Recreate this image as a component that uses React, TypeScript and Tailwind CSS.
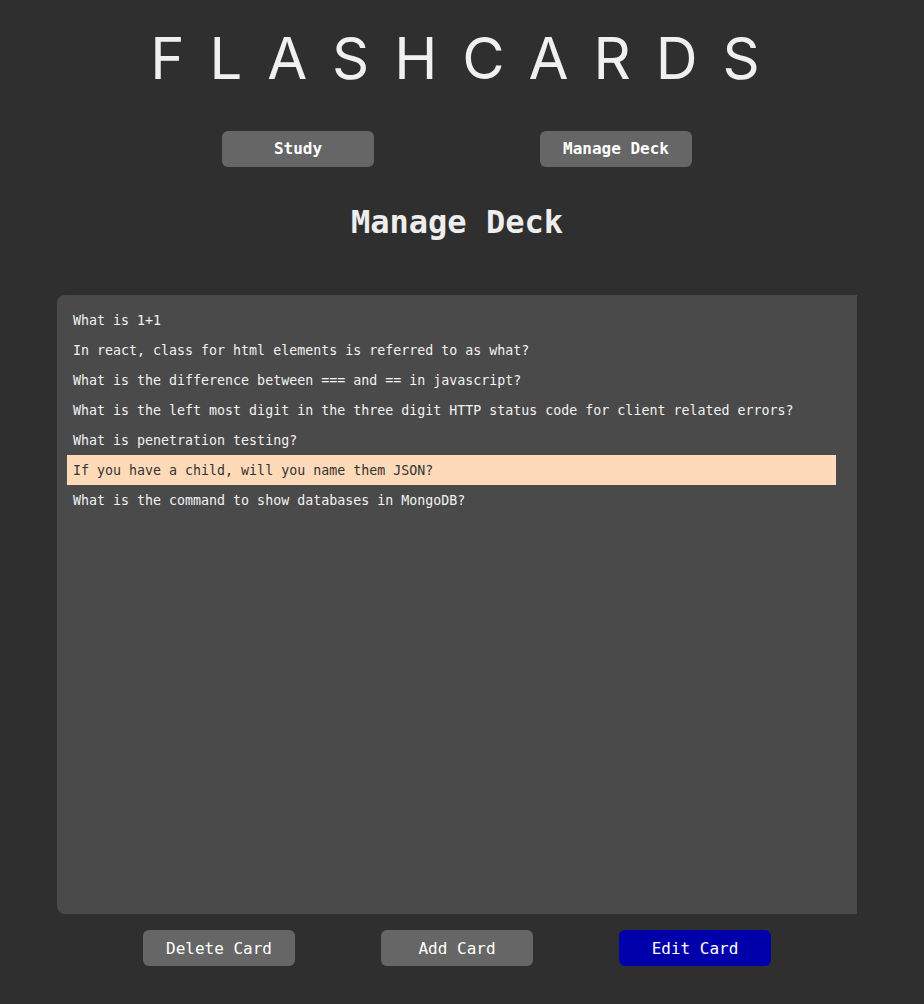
import { useState } from 'react';

const cards = [
    'What is 1+1',
    'In react, class for html elements is referred to as what?',
    'What is the difference between === and == in javascript?',
    'What is the left most digit in the three digit HTTP status code for client related errors?',
    'What is penetration testing?',
    'If you have a child, will you name them JSON?',
    'What is the command to show databases in MongoDB?',
];

const mono = { fontFamily: '"DejaVu Sans Mono", "Liberation Mono", monospace' };

export default function App() {
    const [selected, setSelected] = useState(5);

    return (
        <div className="min-h-[1004px] w-full bg-[#2f2f2f] text-[#eeeeee]" style={mono}>
            <div className="w-[914px]">
                <div className="mx-auto flex w-[800px] flex-col items-center">
                    {/* Titre */}
                    <h1
                        className="mt-[27px] h-[63px] pl-[0.36em] text-[58px] leading-[63px] font-normal tracking-[0.43em] text-[#f0f0f0]"
                        style={{ fontFamily: 'Inter, "Noto Sans", sans-serif' }}
                    >
                        FLASHCARDS
                    </h1>

                    {/* Navigation */}
                    <div className="mt-[41px] flex w-full justify-center gap-[166px]">
                        <button className="h-[36px] w-[152px] rounded-md bg-[#666666] text-[16px] font-bold text-white">
                            Study
                        </button>
                        <button className="h-[36px] w-[152px] rounded-md bg-[#666666] text-[16px] font-bold text-white">
                            Manage Deck
                        </button>
                    </div>

                    <h2 className="mt-[33px] h-[44px] text-[32px] leading-[44px] font-bold text-[#eeeeee]">
                        Manage Deck
                    </h2>

                    {/* Liste des cartes */}
                    <div className="mt-[51px] h-[619px] w-full rounded-l-lg bg-[#4a4a4a] p-[10px]">
                        <ul className="w-[769px]">
                            {cards.map((card, i) => (
                                <li
                                    key={card}
                                    onClick={() => setSelected(i)}
                                    className={`flex h-[30px] cursor-pointer items-center px-[6px] pt-[1px] text-[13.3px] whitespace-nowrap ${
                                        i === selected ? 'bg-[#ffdab9] text-[#333333]' : 'text-[#f2f2f2]'
                                    }`}
                                >
                                    {card}
                                </li>
                            ))}
                        </ul>
                    </div>

                    {/* Actions */}
                    <div className="mt-[16px] flex w-full justify-center gap-[86px]">
                        <button className="h-[36px] w-[152px] rounded-md bg-[#666666] pt-[1px] text-[16px] text-white">
                            Delete Card
                        </button>
                        <button className="h-[36px] w-[152px] rounded-md bg-[#666666] pt-[1px] text-[16px] text-white">
                            Add Card
                        </button>
                        <button className="h-[36px] w-[152px] rounded-md bg-[#0000aa] pt-[1px] text-[16px] text-white">
                            Edit Card
                        </button>
                    </div>
                </div>
            </div>
        </div>
    );
}
